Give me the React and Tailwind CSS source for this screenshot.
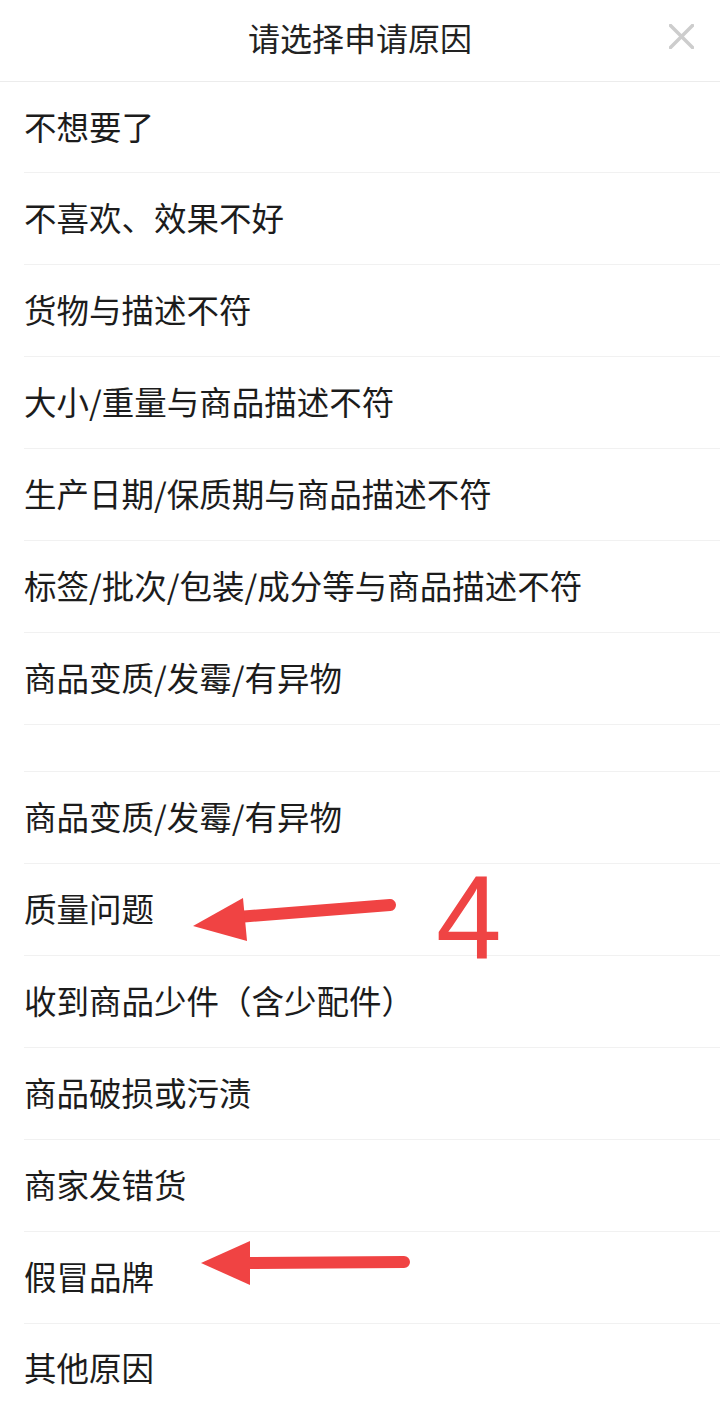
import React from 'react';

const reasons = [
  { text: '不想要了', first: true },
  { text: '不喜欢、效果不好' },
  { text: '货物与描述不符' },
  { text: '大小/重量与商品描述不符' },
  { text: '生产日期/保质期与商品描述不符' },
  { text: '标签/批次/包装/成分等与商品描述不符' },
  { text: '商品变质/发霉/有异物' },
  { text: '', spacer: true },
  { text: '商品变质/发霉/有异物' },
  { text: '质量问题' },
  { text: '收到商品少件（含少配件）' },
  { text: '商品破损或污渍' },
  { text: '商家发错货' },
  { text: '假冒品牌' },
  { text: '其他原因', last: true },
];

const ReasonRow = ({ item }) => {
  if (item.spacer) {
    return <div className="ml-6 h-[47px] border-b border-[#f1f1f1]" />;
  }
  const height = item.first ? 'h-[91px]' : item.last ? 'h-[89px]' : 'h-[92px]';
  return (
    <div
      className={`ml-6 flex items-center ${height} ${item.last ? '' : 'border-b border-[#f1f1f1]'}`}
    >
      <span className="text-[32.5px] leading-none text-[#1c1c1c] -mt-[2px]">{item.text}</span>
    </div>
  );
};

export default function App() {
  return (
    <div
      className="relative w-[720px] h-[1413px] bg-white overflow-hidden"
      style={{ fontFamily: '"Noto Sans CJK SC", "Noto Sans", sans-serif' }}
    >
      {/* 标题栏 */}
      <div className="relative h-[82px] flex items-center justify-center border-b border-[#ececec]">
        <span className="text-[32px] leading-none text-[#222] -mt-[8px]">请选择申请原因</span>
        <button className="absolute right-[26px] top-[24px] w-[25px] h-[25px]" aria-label="关闭">
          <svg viewBox="0 0 25 25" className="w-[25px] h-[25px]">
            <path d="M1.5 1.5 L23.5 23.5 M23.5 1.5 L1.5 23.5" stroke="#cdcdcd" strokeWidth="3.5" strokeLinecap="round" />
          </svg>
        </button>
      </div>

      {/* 原因列表 */}
      <div className="flex flex-col">
        {reasons.map((item, i) => (
          <ReasonRow key={i} item={item} />
        ))}
      </div>

      {/* 红色标注 */}
      <svg
        className="absolute inset-0 pointer-events-none"
        width="720"
        height="1413"
        viewBox="0 0 720 1413"
      >
        <line x1="238" y1="917" x2="390" y2="905" stroke="#f04343" strokeWidth="12" strokeLinecap="round" />
        <polygon points="193,926 243,898 247,941" fill="#f04343" />
        <line x1="245" y1="1263" x2="404" y2="1262" stroke="#f04343" strokeWidth="12" strokeLinecap="round" />
        <polygon points="201,1263 250,1241 250,1285" fill="#f04343" />
      </svg>
      <span
        className="absolute left-[436px] top-[859px] text-[118px] leading-none text-[#ef4444] font-light"
        style={{ fontFamily: '"Liberation Sans", Arial, sans-serif' }}
      >
        4
      </span>
    </div>
  );
}
